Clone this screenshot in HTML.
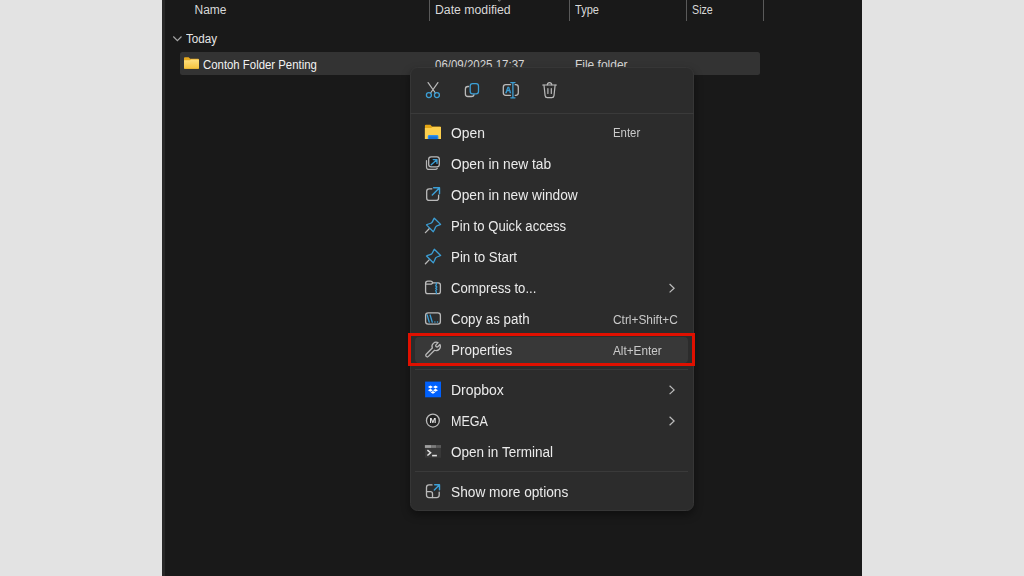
<!DOCTYPE html>
<html lang="en">
<head>
<meta charset="utf-8">
<title>Context menu - Properties</title>
<style>
*{box-sizing:border-box;margin:0;padding:0}
html,body{width:1024px;height:576px;overflow:hidden;background:#e3e3e3;font-family:"Liberation Sans",sans-serif}
#win{position:absolute;left:162px;top:0;width:699.6px;height:576px;background:#191919;overflow:hidden}
.t{transform-origin:0 50%;position:absolute;white-space:pre;line-height:16px;font-size:12px;color:#d8d8d8}
.sep{position:absolute;top:0;width:1px;height:21px;background:#5a5a5a}
#row{position:absolute;left:18px;top:51.6px;width:580px;height:23.6px;background:#333333;border-radius:2.5px}
#menu{position:absolute;left:409.7px;top:67.3px;width:284.5px;height:443.3px;background:#2c2c2c;border:1px solid #363636;border-radius:7.5px;box-shadow:0 4px 8px rgba(0,0,0,.4)}
#mi0{position:absolute;left:-0.7px;top:-0.3px;width:284px;height:442px;will-change:transform}
.hs{position:absolute;left:0;width:284px;height:1px;background:#3a3a3a}
.hs.in{left:5px;width:273px}
.mi{transform-origin:0 50%;position:absolute;left:40.9px;white-space:pre;font-size:14px;line-height:20px;color:#ebebeb}
.sc{transform-origin:0 50%;position:absolute;left:203px;white-space:pre;font-size:12px;line-height:16px;color:#cacaca}
.ic{position:absolute;left:15px;width:16px;height:16px;overflow:visible}
.ch{position:absolute;left:258px;width:8px;height:10px;overflow:visible}
#hover{position:absolute;left:5px;top:268.5px;width:273px;height:26.5px;background:#383838;border-radius:4px}
#red{position:absolute;left:408px;top:333px;width:287px;height:33px;border:3px solid #e01000}
</style>
</head>
<body>
<div id="win">
  <div style="position:absolute;left:0;top:0;width:3.3px;height:576px;background:#272727"></div>
  <svg style="position:absolute;left:334px;top:0;width:7px;height:3px;overflow:visible" viewBox="0 0 7 3"><path d="M0.6 -2 L3.3 1.3 L6 -2" fill="none" stroke="#8c8c8c" stroke-width="1"/></svg>
  <div class="sep" style="left:267px"></div>
  <div class="sep" style="left:407px"></div>
  <div class="sep" style="left:524px"></div>
  <div class="sep" style="left:601px"></div>
  <span class="t" id="h1" style="left:32.5px;top:2.2px">Name</span>
  <span class="t" id="h2" style="transform:scaleX(1.0219);left:272.7px;top:2.2px">Date modified</span>
  <span class="t" id="h3" style="transform:scaleX(0.9200);left:412.5px;top:2.2px">Type</span>
  <span class="t" id="h4" style="transform:scaleX(0.8913);left:529.5px;top:2.2px">Size</span>
  <svg style="position:absolute;left:11px;top:36px;width:9px;height:6px;overflow:visible" viewBox="0 0 9 6"><path d="M0.3 0.5 L4.4 4.6 L8.5 0.5" fill="none" stroke="#a5a5a5" stroke-width="1.2"/></svg>
  <span class="t" id="today" style="transform:scaleX(0.9688);left:24px;top:30.5px;color:#e6e6e6">Today</span>
  <div id="row"></div>
  <svg style="position:absolute;left:22px;top:57px;width:15px;height:12px" viewBox="0 0 15 12">
    <defs><linearGradient id="fg" x1="0" y1="0" x2="0" y2="1"><stop offset="0" stop-color="#ffe083"/><stop offset="1" stop-color="#f5c23c"/></linearGradient></defs>
    <path d="M0 1.2 Q0 0.3 0.9 0.3 H4.6 L6.2 1.7 H14.1 Q15 1.7 15 2.6 V11 Q15 11.8 14.2 11.8 H0.8 Q0 11.8 0 11 Z" fill="#e6a91e"/>
    <path d="M0 3.2 H6 L7 2.4 H14.2 Q15 2.4 15 3.2 V11 Q15 11.8 14.2 11.8 H0.8 Q0 11.8 0 11 Z" fill="url(#fg)"/>
  </svg>
  <span class="t" id="fname" style="transform:scaleX(0.9483);left:41px;top:56.5px;color:#f2f2f2">Contoh Folder Penting</span>
  <span class="t" id="fdate" style="transform:scaleX(0.9570);left:272.9px;top:56.5px">06/09/2025 17:37</span>
  <span class="t" id="ftype" style="left:412.9px;top:56.5px">File folder</span>
</div>

<div id="menu"><div id="mi0">
  <div class="hs" style="top:45px"></div>
  <div id="hover"></div>
  <div class="hs in" style="top:301px"></div>
  <div class="hs in" style="top:403px"></div>

  <span class="mi" id="m1" style="transform:scaleX(0.9909);top:54.5px">Open</span>
  <span class="mi" id="m2" style="transform:scaleX(0.9822);top:85.65px">Open in new tab</span>
  <span class="mi" id="m3" style="transform:scaleX(0.9814);top:116.8px">Open in new window</span>
  <span class="mi" id="m4" style="transform:scaleX(0.9369);top:147.9px">Pin to Quick access</span>
  <span class="mi" id="m5" style="transform:scaleX(0.9536);top:179.05px">Pin to Start</span>
  <span class="mi" id="m6" style="transform:scaleX(0.9378);top:210.2px">Compress to...</span>
  <span class="mi" id="m7" style="transform:scaleX(0.9524);top:241.3px">Copy as path</span>
  <span class="mi" id="m8" style="transform:scaleX(0.9603);top:272.45px">Properties</span>
  <span class="mi" id="m9" style="transform:scaleX(1.0000);top:311.85px">Dropbox</span>
  <span class="mi" id="m10" style="transform:scaleX(0.8976);top:343px">MEGA</span>
  <span class="mi" id="m11" style="transform:scaleX(0.9667);top:374.15px">Open in Terminal</span>
  <span class="mi" id="m12" style="transform:scaleX(0.9790);top:413.85px">Show more options</span>

  <span class="sc" id="s1" style="transform:scaleX(0.9500);top:57px">Enter</span>
  <span class="sc" id="s2" style="transform:scaleX(0.9908);top:243.5px">Ctrl+Shift+C</span>
  <span class="sc" id="s3" style="transform:scaleX(0.9800);top:274.5px">Alt+Enter</span>
</div></div>

<svg id="icons" style="position:absolute;left:0;top:0;width:1024px;height:576px;pointer-events:none" viewBox="0 0 1024 576" fill="none" stroke-linecap="round" stroke-linejoin="round" font-family="Liberation Sans, sans-serif">
  <!-- toolbar: cut -->
  <g stroke="#bababa" stroke-width="1.2"><path d="M428.1 82.6 L435.4 93 M437.9 82.6 L430.6 93"/></g>
  <g stroke="#3c9fd6" stroke-width="1.3"><circle cx="428.9" cy="95.1" r="2.5"/><circle cx="436.9" cy="95.1" r="2.5"/></g>
  <!-- toolbar: copy -->
  <path d="M468.6 86.5 H467.9 Q465.4 86.5 465.4 89 V94 Q465.4 96.5 467.9 96.5 H471.5 Q474 96.5 474 94.6" stroke="#bababa" stroke-width="1.3"/>
  <rect x="470.2" y="83.7" width="8.3" height="10.1" rx="2.4" stroke="#3c9fd6" stroke-width="1.3"/>
  <!-- toolbar: rename -->
  <path d="M510.5 84.7 H505.8 Q503.3 84.7 503.3 87.2 V92.8 Q503.3 95.3 505.8 95.3 H510.5 M515.2 84.7 H515.8 Q518.3 84.7 518.3 87.2 V92.8 Q518.3 95.3 515.8 95.3 H515.2" stroke="#bababa" stroke-width="1.3"/>
  <path d="M510.8 82.6 H515 M510.8 97.8 H515 M512.9 82.6 V97.8" stroke="#3c9fd6" stroke-width="1.3"/>
  <text x="508.4" y="92.8" font-size="8.4" font-weight="700" fill="#3c9fd6" stroke="#3c9fd6" stroke-width="0.35" text-anchor="middle">A</text>
  <!-- toolbar: delete -->
  <g stroke="#bababa" stroke-width="1.2">
    <path d="M542.7 85 H556.4"/>
    <path d="M547.3 84.8 Q547.5 82.7 549.5 82.7 Q551.6 82.7 551.8 84.8"/>
    <path d="M544 85.2 L545.1 95.6 Q545.3 97.6 547.3 97.6 H551.8 Q553.8 97.6 554 95.6 L555.1 85.2"/>
    <path d="M547.9 88.6 V93.4 M551.3 88.6 V93.4"/>
  </g>

  <!-- open: folder -->
  <g stroke="none">
    <path d="M424.9 125.8 Q424.9 124.8 425.9 124.8 H430.4 L432 126.4 H440 Q441 126.4 441 127.4 V139.1 H424.9 Z" fill="#e3a514"/>
    <path d="M424.9 128 H431.2 L432.4 127 H441 V139.1 H424.9 Z" fill="#fccf4d"/>
    <path d="M427.8 139.1 V136.4 Q427.8 135 429.2 135 H437 Q438.4 135 438.4 136.4 V139.1 Z" fill="#2f92ee"/>
    <rect x="428.8" y="136.4" width="8.6" height="2.7" fill="#1672d8"/>
  </g>
  <!-- open in new tab -->
  <path d="M426.5 160.6 V166.9 Q426.5 169.4 429 169.4 H435.2 Q436.6 169.4 437.3 168.4" stroke="#b4b4b4" stroke-width="1.2"/>
  <rect x="428.7" y="156.9" width="10.6" height="10" rx="2.4" stroke="#bababa" stroke-width="1.3" fill="#1e1e1e"/>
  <path d="M431.2 164.8 L436.9 159.7 M433.2 159.6 H437 V163.4" stroke="#3c9fd6" stroke-width="1.3"/>
  <!-- open in new window -->
  <path d="M431.9 188.8 H429.2 Q426.7 188.8 426.7 191.3 V197.9 Q426.7 200.4 429.2 200.4 H436.1 Q438.6 200.4 438.6 197.9 V195.2" stroke="#bababa" stroke-width="1.3"/>
  <path d="M432.3 194.9 L439.3 188 M433.6 187.8 H439.5 V193.8" stroke="#3c9fd6" stroke-width="1.4"/>
  <!-- pin x2 -->
  <g>
    <path d="M429.4 228.5 L425.4 232.6" stroke="#bababa" stroke-width="1.3"/>
    <path d="M434.3 218.2 L440.6 224.4 C438.5 225.5 436.6 225.6 435.9 226.6 C435 227.8 434.6 230 433.3 231.7 L426.5 224.9 C428.5 223.8 430.6 223.6 431.6 222.8 C432.7 221.9 433 220 434.3 218.2 Z" stroke="#3c9fd6" stroke-width="1.3"/>
  </g>
  <g transform="translate(0 31.1)">
    <path d="M429.4 228.5 L425.4 232.6" stroke="#bababa" stroke-width="1.3"/>
    <path d="M434.3 218.2 L440.6 224.4 C438.5 225.5 436.6 225.6 435.9 226.6 C435 227.8 434.6 230 433.3 231.7 L426.5 224.9 C428.5 223.8 430.6 223.6 431.6 222.8 C432.7 221.9 433 220 434.3 218.2 Z" stroke="#3c9fd6" stroke-width="1.3"/>
  </g>
  <!-- compress -->
  <path d="M425.6 284.2 H430.6 Q431.4 284.2 431.9 283.7 L433 282.9 H438.2 Q440.4 282.9 440.4 285.1 V291.5 Q440.4 293.7 438.2 293.7 H427.8 Q425.6 293.7 425.6 291.5 V283.4 Q425.6 281.2 427.8 281.2 H430.6 Q431.4 281.2 432 281.8 L433 282.9" stroke="#bababa" stroke-width="1.3"/>
  <path d="M436.3 283 V284.6 L435.7 285.8 L436.8 287 L435.7 288.2 L436.8 289.4 L435.7 290.6 L436.3 291.8 V293.6" stroke="#3c9fd6" stroke-width="1.3"/>
  <!-- copy as path -->
  <rect x="425.6" y="312.9" width="14.8" height="11.2" rx="2.6" stroke="#bababa" stroke-width="1.3"/>
  <path d="M427.2 315 L429.2 322.2 M430.1 315 L432.3 322.2" stroke="#3c9fd6" stroke-width="1.3"/>
  <path d="M434.9 321.9 h0.01 M437.5 321.9 h0.01" stroke="#3c9fd6" stroke-width="1.5"/>
  <!-- properties wrench -->
  <g transform="translate(436.2 346.4) rotate(45)">
    <path d="M-1.35 -3.95 V-1.2 A1.35 1.35 0 0 0 1.35 -1.2 V-3.95 A4.2 4.2 0 0 1 1.55 3.9 V12.6 A1.55 1.55 0 0 1 -1.55 12.6 V3.9 A4.2 4.2 0 0 1 -1.35 -3.95 Z" stroke="#bababa" stroke-width="1.3"/>
  </g>
  <!-- dropbox -->
  <g stroke="none">
    <rect x="425.1" y="381.6" width="15.9" height="15.7" fill="#0061fe"/>
    <path d="M430.4 385.6 L432.9 387.1 L430.4 388.6 L427.9 387.1 Z M435.5 385.6 L438 387.1 L435.5 388.6 L433 387.1 Z M430.4 388.7 L432.9 390.2 L430.4 391.7 L427.9 390.2 Z M435.5 388.7 L438 390.2 L435.5 391.7 L433 390.2 Z M432.95 391 L435.3 392.4 L432.95 393.8 L430.6 392.4 Z" fill="#ffffff"/>
  </g>
  <!-- mega -->
  <circle cx="432.9" cy="420.6" r="6.45" stroke="#bababa" stroke-width="1.3" fill="#222222"/>
  <text x="432.9" y="423.1" font-size="6.9" font-weight="700" fill="#e8e8e8" stroke="none" text-anchor="middle" transform="translate(432.9 0) scale(1.17 1) translate(-432.9 0)">M</text>
  <!-- terminal -->
  <g stroke="none">
    <rect x="424.9" y="445.1" width="16.1" height="12.6" fill="#383838"/>
    <rect x="424.9" y="445.1" width="6.2" height="2.8" fill="#a0a0a0"/>
    <rect x="431.1" y="445.1" width="5" height="2.8" fill="#7c7c7c"/>
    <rect x="436.1" y="445.1" width="4.9" height="2.8" fill="#5a5a5a"/>
    <rect x="432.1" y="454.8" width="4.8" height="1.6" fill="#e0e0e0"/>
  </g>
  <path d="M427.4 450.1 L430.6 452.8 L427.4 455.5" stroke="#e0e0e0" stroke-width="1.5" stroke-linecap="butt" stroke-linejoin="miter"/>
  <!-- show more options -->
  <path d="M432 484.9 H429 Q426.5 484.9 426.5 487.4 V495.1 Q426.5 497.6 429 497.6 H436.7 Q439.2 497.6 439.2 495.1 V492.2" stroke="#bababa" stroke-width="1.3"/>
  <path d="M426.5 491.6 H430.4 Q432.5 491.6 432.5 493.7 V497.6" stroke="#bababa" stroke-width="1.3"/>
  <path d="M434.3 489.9 L439.3 484.9 M434.7 484.8 H439.5 V489.7" stroke="#3c9fd6" stroke-width="1.4"/>
  <!-- chevrons -->
  <g stroke="#bdbdbd" stroke-width="1.2" stroke-linecap="butt" stroke-linejoin="miter">
    <path d="M669.6 284 L674.1 288.2 L669.6 292.4"/>
    <path d="M669.6 385.7 L674.1 389.9 L669.6 394.1"/>
    <path d="M669.6 416.8 L674.1 421 L669.6 425.2"/>
  </g>
</svg>
<div id="red"></div>
</body>
</html>
